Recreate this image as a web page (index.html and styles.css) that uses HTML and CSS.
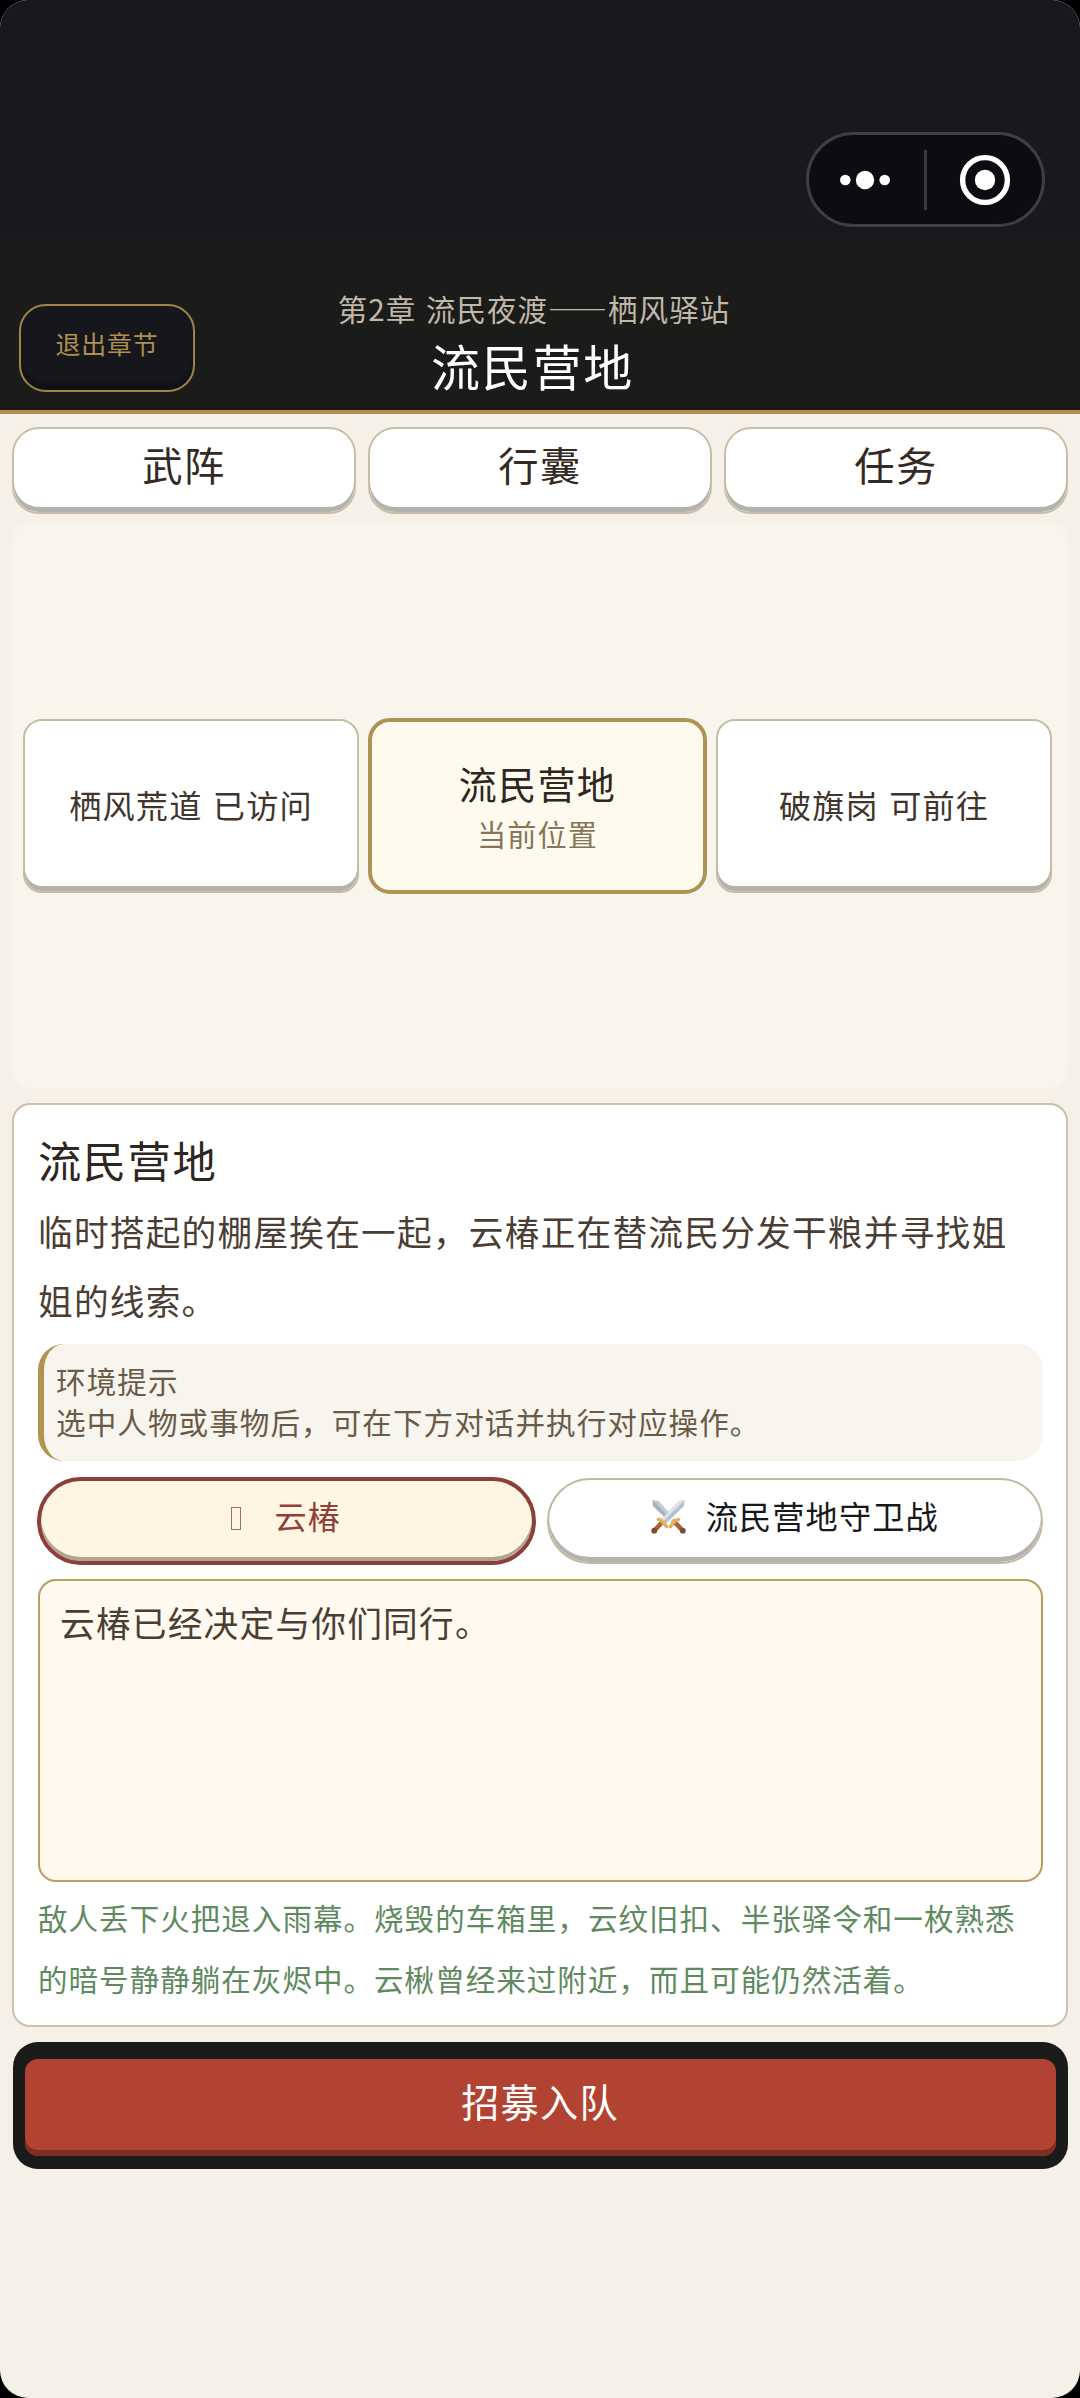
FILE: index.html
```html
<!DOCTYPE html>
<html lang="zh-CN">
<head>
<meta charset="utf-8">
<title>流民营地</title>
<link rel="stylesheet" href="styles.css">
</head>
<body>
<div class="screen">
  <div class="statusbar">
    <div class="capsule">
      <svg class="capsule-more" width="50" height="24" viewBox="0 0 50 24"><circle cx="5.3" cy="12" r="5.3"/><circle cx="25" cy="12" r="9.2"/><circle cx="44.7" cy="12" r="5.3"/></svg>
      <span class="capsule-line"></span>
      <svg class="capsule-close" width="52" height="52" viewBox="0 0 52 52"><circle class="ring" cx="26" cy="26" r="22.4"/><circle cx="26" cy="26" r="10.2"/></svg>
    </div>
  </div>
  <header class="header">
    <button class="exit">退出章节</button>
    <div class="headline">
      <p class="chapter">第2章 流民夜渡——栖风驿站</p>
      <h1 class="place">流民营地</h1>
    </div>
  </header>
  <nav class="tabs">
    <button class="tab">武阵</button>
    <button class="tab">行囊</button>
    <button class="tab">任务</button>
  </nav>
  <section class="map">
    <div class="node">栖风荒道 已访问</div>
    <div class="node current"><span class="node-name">流民营地</span><span class="node-state">当前位置</span></div>
    <div class="node">破旗岗 可前往</div>
  </section>
  <section class="detail">
    <h2 class="detail-title">流民营地</h2>
    <p class="detail-text">临时搭起的棚屋挨在一起，云椿正在替流民分发干粮并寻找姐姐的线索。</p>
    <div class="hint"><p>环境提示</p><p>选中人物或事物后，可在下方对话并执行对应操作。</p></div>
    <div class="targets">
      <button class="target selected"><span class="glyph-box"></span><span>云椿</span></button>
      <button class="target">
        <svg class="swords" width="35" height="35" viewBox="0 0 35 35">
          <g>
            <path d="M33.5 1 L33 7 L14.5 25 L10 20.5 L27.5 2Z" fill="#b4c2cc"/>
            <path d="M33.5 1 L27.5 2 L10 20.5 L12 22.5Z" fill="#dde5ea"/>
            <path d="M10 24.5 L3.5 31.5" stroke="#a5623c" stroke-width="4.6" stroke-linecap="round"/>
            <circle cx="3.2" cy="31.7" r="2.9" fill="#7d4a35"/>
            <path d="M7.5 20.5 Q10 20 15.5 27.5" fill="none" stroke="#e5ae59" stroke-width="3.6" stroke-linecap="round"/>
          </g>
          <g transform="matrix(-1 0 0 1 35 0)">
            <path d="M33.5 1 L33 7 L22 17.5 L17.5 13 L27.5 2Z" fill="#c0ccd4"/>
            <path d="M33.5 1 L33 7 L22 17.5 L20 15Z" fill="#a3b2be"/>
            <path d="M14 21 L10 24.5" stroke="#b4c2cc" stroke-width="5"/>
            <path d="M10 24.5 L3.5 31.5" stroke="#a5623c" stroke-width="4.6" stroke-linecap="round"/>
            <circle cx="3.2" cy="31.7" r="2.9" fill="#7d4a35"/>
            <path d="M7.5 20.5 Q10 20 15.5 27.5" fill="none" stroke="#e5ae59" stroke-width="3.6" stroke-linecap="round"/>
          </g>
        </svg>
        <span>流民营地守卫战</span>
      </button>
    </div>
    <div class="dialogue">云椿已经决定与你们同行。</div>
    <p class="result">敌人丢下火把退入雨幕。烧毁的车箱里，云纹旧扣、半张驿令和一枚熟悉的暗号静静躺在灰烬中。云楸曾经来过附近，而且可能仍然活着。</p>
  </section>
  <div class="actions"><button class="primary">招募入队</button></div>
</div>
</body>
</html>
```
FILE: styles.css
```css
* { box-sizing: border-box; margin: 0; padding: 0; letter-spacing: .035em; }
body { background: #000; font-family: "Noto Sans CJK SC", sans-serif; }
button { font: inherit; border: 0; background: none; white-space: nowrap; }
.screen { width: 1080px; height: 2398px; background: #f5f0e8; border-radius: 28px; overflow: hidden; display: flex; flex-direction: column; }

.statusbar { height: 238px; flex: none; background: #17191e; display: flex; justify-content: flex-end; align-items: flex-start; padding: 132px 35px 0 0; }
.capsule { width: 239px; height: 95px; border: 3px solid #3e3f42; border-radius: 48px; background: #0c0d11; display: flex; align-items: center; padding-left: 31px; }
.capsule svg { fill: #fff; display: block; }
.capsule-line { width: 3px; height: 60px; background: #3a3b3e; margin: 0 32px 0 34px; }
.ring { fill: none; stroke: #fff; stroke-width: 5.4; }

.header { height: 176px; flex: none; background: #1b1b1a; border-bottom: 4px solid #b0904f; display: flex; padding: 0 0 0 19px; }
.exit { width: 176px; height: 88px; margin-top: 66px; border: 2px solid #a08545; border-radius: 27px; background: #15171c; box-shadow: inset 0 -6px 3px #101114; color: #b0904f; font-size: 24.9px; line-height: 36px; padding-bottom: 11px; }
.headline { width: 678px; text-align: center; padding-top: 48px; }
.chapter { font-size: 29.5px; word-spacing: 2px; line-height: 44px; color: #c0b9aa; }
.place { font-size: 49px; font-weight: 400; line-height: 70px; color: #fff; padding-right: 3px; }

.tabs { display: grid; grid-template-columns: repeat(3, 1fr); gap: 12px; padding: 13px 12px 0; }
.tab { height: 87px; border: 2px solid #c9bea5; border-radius: 27px; background: #fff; box-shadow: inset 0 -5px #b3b2ad; color: #352a23; font-size: 40.3px; line-height: 60px; padding-bottom: 13px; }

.map { height: 565px; flex: none; margin: 9px 12px 0; border-radius: 18px; background: #f8f5ec; display: grid; grid-template-columns: 336px 339px 336px; gap: 9px; align-items: center; padding: 0 0 0 11px; }
.node { height: 174px; border: 2px solid #c6bca4; border-radius: 19px; background: #fff; box-shadow: inset 0 -5px #b3b2ad; color: #40352d; font-size: 32.2px; display: flex; flex-direction: column; align-items: center; justify-content: center; word-spacing: 2px; padding-bottom: 3px; }
.node.current { height: 176px; border: 4px solid #ae9454; border-radius: 22px; background: #fefbee; box-shadow: none; padding-bottom: 1px; }
.node-name { font-size: 38px; line-height: 56px; color: #2f261f; }
.node-state { font-size: 29.2px; line-height: 45px; color: #87745a; }

.detail { height: 924px; flex: none; margin: 15px 12px 0; border: 2px solid #cbc0aa; border-radius: 18px; background: #fff; padding: 21px 23px 0 24px; }
.detail-title { font-size: 43.3px; font-weight: 400; line-height: 66px; color: #2f261f; }
.detail-text { font-size: 34.7px; line-height: 69.3px; color: #4a3e34; margin-top: 5px; padding-right: 20px; }
.hint { height: 117px; margin-top: 8px; border-left: 6px solid #b09450; border-radius: 26px; background: #f8f5ee; padding: 16px 0 0 12px; color: #6a5a48; font-size: 29.6px; line-height: 41.5px; }
.targets { display: grid; grid-template-columns: 1fr 1fr; gap: 12px; margin-top: 17px; }
.target { height: 86px; border: 2px solid #c4b9a0; border-radius: 43px; background: #fff; box-shadow: inset 0 -5px #b5b3ae; color: #17181c; font-size: 32.2px; line-height: 48px; display: flex; align-items: center; justify-content: center; gap: 20px; padding-bottom: 9px; }
.target.selected { height: 88px; margin: -1px; border: 4px solid #8c3f39; border-radius: 44px; background: #fef6e2; box-shadow: inset 0 -4px #b1a490; color: #8f403a; gap: 33px; }
.target span:last-child { position: relative; top: -1px; }
.glyph-box { width: 10px; height: 23px; border: 1px solid #a0705f; margin-top: 5px; }
.dialogue { height: 303px; margin-top: 15px; border: 2px solid #b99e60; border-radius: 18px; background: #fff9f0; padding: 12px 20px; font-size: 34.7px; line-height: 58px; color: #4a3e34; }
.result { font-size: 29.52px; line-height: 61.2px; color: #5f8a60; margin-top: 5px; }

.actions { height: 127px; flex: none; margin: 15px 12.5px 0; border-radius: 25px; background: #1b1b1a; padding: 17px 12px 13px; }
.primary { width: 100%; height: 97px; border-radius: 13px; background: #b24332; box-shadow: inset 0 -6px #7d2d24; color: #fff; font-size: 38.1px; line-height: 60px; padding-bottom: 13px; }
```
